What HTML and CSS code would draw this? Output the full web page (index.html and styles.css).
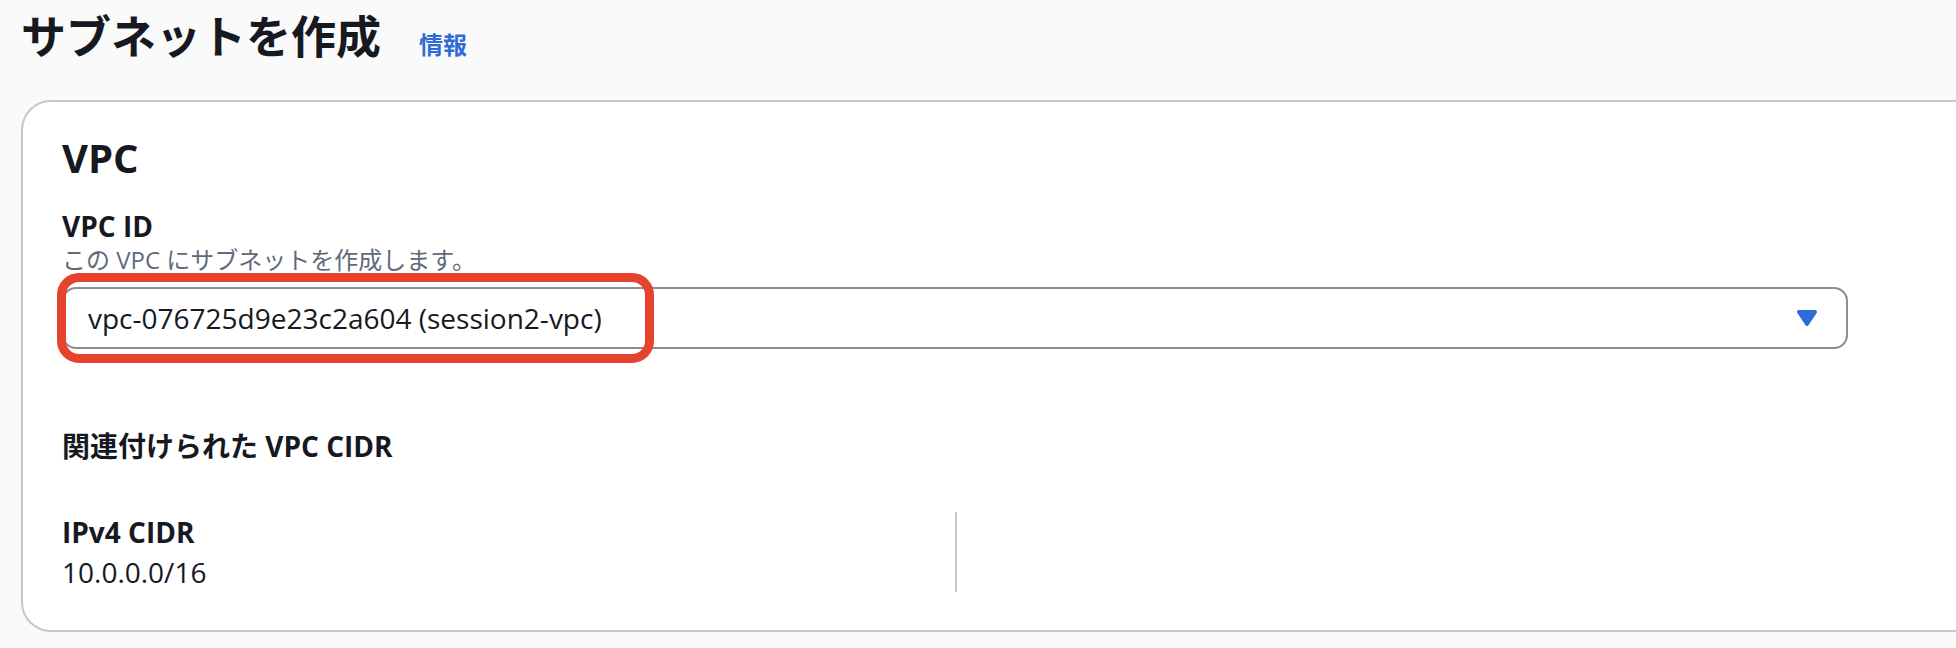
FILE: index.html
```html
<!DOCTYPE html>
<html lang="ja">
<head>
<meta charset="utf-8">
<title>サブネットを作成</title>
<link rel="stylesheet" href="styles.css">
</head>
<body>
<div class="page">
  <header class="page-header">
    <h1 class="title">サブネットを作成</h1>
    <a class="info">情報</a>
  </header>
  <section class="card">
    <h2 class="card-title">VPC</h2>
    <div class="field">
      <div class="label">VPC ID</div>
      <div class="desc">この VPC にサブネットを作成します。</div>
      <div class="select-wrap">
        <div class="select">
          <span class="select-value">vpc-076725d9e23c2a604 (session2-vpc)</span>
          <svg class="caret" viewBox="0 0 16 16" width="32" height="32" aria-hidden="true">
            <path d="M4 5h8l-4 6-4-6z"/>
          </svg>
        </div>
        <div class="highlight"></div>
      </div>
    </div>
    <h3 class="sub-title">関連付けられた VPC CIDR</h3>
    <div class="kv-grid">
      <div class="kv-col kv-first">
        <div class="kv-label">IPv4 CIDR</div>
        <div class="kv-value">10.0.0.0/16</div>
      </div>
      <div class="kv-col"></div>
    </div>
  </section>
</div>
</body>
</html>
```
FILE: styles.css
```css
html, body {
  margin: 0;
  height: 100%;
  overflow: hidden;
  background: #fafafa;
}
body {
  font-family: "Open Sans", "Noto Sans CJK JP", sans-serif;
  color: #16191f;
}
.page {
  padding: 5px 0 0 21px;
}
.page-header {
  display: flex;
  align-items: baseline;
}
.title {
  margin: 0;
  font-family: "Noto Sans CJK JP", sans-serif;
  font-weight: 700;
  font-size: 45px;
  line-height: 60px;
}
.info {
  margin-left: 38px;
  font-family: "Noto Sans CJK JP", sans-serif;
  font-weight: 700;
  font-size: 24px;
  line-height: 32px;
  color: #2e6bd9;
  text-decoration: none;
}
.card {
  margin-top: 35px;
  width: 1990px;
  box-sizing: border-box;
  background: #fff;
  border: 2px solid #c6c6cd;
  border-radius: 30px;
  padding: 32px 0 38px 39px;
}
.card-title {
  margin: 0;
  font-weight: 700;
  font-size: 40px;
  line-height: 48px;
}
.label {
  margin-top: 26px;
  font-weight: 700;
  font-size: 28px;
  line-height: 36px;
}
.desc {
  font-size: 24px;
  line-height: 32px;
  color: #5f6b7a;
}
.select-wrap {
  position: relative;
  margin-top: 11px;
  width: 1786px;
}
.select {
  box-sizing: border-box;
  height: 62px;
  border: 2px solid #8c8c94;
  border-radius: 14px;
  background: #fff;
  display: flex;
  align-items: center;
  justify-content: space-between;
  padding: 0 23px 0 24px;
}
.select-value {
  font-size: 28px;
  line-height: 36px;
}
.caret {
  display: block;
  fill: #2e6bd9;
  stroke: #2e6bd9;
  stroke-width: 2;
  stroke-linejoin: round;
}
.highlight {
  position: absolute;
  left: -5px;
  top: -14px;
  width: 597px;
  height: 90px;
  box-sizing: border-box;
  border: 9px solid #e5432d;
  border-radius: 22px;
  pointer-events: none;
}
.sub-title {
  margin: 79px 0 0;
  font-weight: 700;
  font-size: 28px;
  line-height: 36px;
}
.kv-grid {
  margin-top: 48px;
  display: grid;
  grid-template-columns: 895px 1fr;
}
.kv-first {
  border-right: 2px solid #c6c6cd;
}
.kv-label {
  font-weight: 700;
  font-size: 28px;
  line-height: 40px;
}
.kv-value {
  font-size: 28px;
  line-height: 40px;
}
```
